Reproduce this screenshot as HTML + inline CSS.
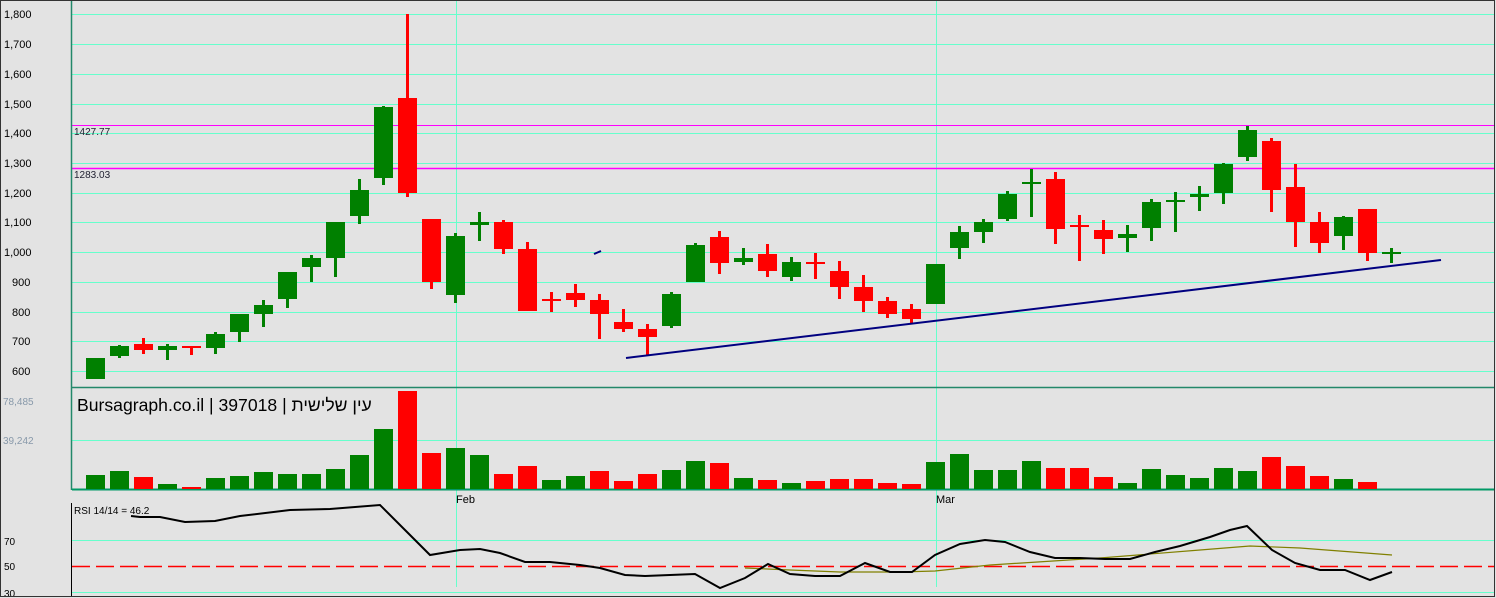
<!DOCTYPE html>
<html><head><meta charset="utf-8"><style>
html,body{margin:0;padding:0;background:#e3e3e3;}
svg{display:block;font-family:"Liberation Sans",Arial,sans-serif;}
</style></head><body>
<svg id="s" width="1496" height="598" viewBox="0 0 1496 598" xmlns="http://www.w3.org/2000/svg">
<rect x="0" y="0" width="1496" height="598" fill="#e3e3e3"/>
<g stroke="#66ffcc" stroke-width="1">
<line x1="72" y1="14.5" x2="1494" y2="14.5"/><line x1="72" y1="44.5" x2="1494" y2="44.5"/>
<line x1="72" y1="74.5" x2="1494" y2="74.5"/><line x1="72" y1="104.5" x2="1494" y2="104.5"/>
<line x1="72" y1="133.5" x2="1494" y2="133.5"/><line x1="72" y1="163.5" x2="1494" y2="163.5"/>
<line x1="72" y1="193.5" x2="1494" y2="193.5"/><line x1="72" y1="222.5" x2="1494" y2="222.5"/>
<line x1="72" y1="252.5" x2="1494" y2="252.5"/><line x1="72" y1="282.5" x2="1494" y2="282.5"/>
<line x1="72" y1="312.5" x2="1494" y2="312.5"/><line x1="72" y1="341.5" x2="1494" y2="341.5"/>
<line x1="72" y1="371.5" x2="1494" y2="371.5"/>
<line x1="72" y1="440.5" x2="1494" y2="440.5"/>
<line x1="72" y1="540.5" x2="1494" y2="540.5"/><line x1="72" y1="592.5" x2="1494" y2="592.5"/>
<line x1="456.5" y1="0" x2="456.5" y2="587"/><line x1="936.5" y1="0" x2="936.5" y2="587"/>
</g>
<line x1="72" y1="125.5" x2="1494" y2="125.5" stroke="#ff00ff" stroke-width="1"/>
<line x1="72" y1="168.5" x2="1494" y2="168.5" stroke="#ff00ff" stroke-width="1.5"/>
<line x1="72" y1="566.5" x2="1494" y2="566.5" stroke="#ff0000" stroke-width="1.5" stroke-dasharray="18,6"/>
<line x1="71.5" y1="0" x2="71.5" y2="490" stroke="#22886a" stroke-width="1.5"/>
<line x1="72" y1="387.5" x2="1494" y2="387.5" stroke="#22886a" stroke-width="1.5"/>
<line x1="72" y1="489.5" x2="1494" y2="489.5" stroke="#009966" stroke-width="2"/>
<line x1="71.5" y1="503" x2="71.5" y2="596" stroke="#000" stroke-width="1"/>
<g font-size="11" fill="#000">
<text x="4" y="18">1,800</text><text x="4" y="48">1,700</text><text x="4" y="78">1,600</text>
<text x="4" y="108">1,500</text><text x="4" y="137">1,400</text><text x="4" y="167">1,300</text>
<text x="4" y="197">1,200</text><text x="4" y="226">1,100</text><text x="4" y="256">1,000</text>
<text x="12" y="286">900</text><text x="12" y="316">800</text><text x="12" y="345">700</text>
<text x="12" y="375">600</text>
</g>
<g font-size="10" fill="#8899aa"><text x="3" y="405">78,485</text><text x="3" y="444">39,242</text></g>
<g font-size="10" fill="#000"><text x="4" y="545">70</text><text x="4" y="570">50</text><text x="4" y="597">30</text></g>
<g font-size="10" fill="#223"><text x="74" y="135">1427.77</text><text x="74" y="178">1283.03</text></g>
<text x="77" y="411" font-size="17.6" fill="#000" font-family="Liberation Sans, 'Noto Sans CJK JP', sans-serif">Bursagraph.co.il | 397018 | עין שלישית</text>
<text x="456" y="503" font-size="11" fill="#000">Feb</text>
<text x="936" y="503" font-size="11" fill="#000">Mar</text>
<text x="74" y="514" font-size="10" fill="#000">RSI 14/14 = 46.2</text>
<g id="c"></g>
<line x1="626" y1="358" x2="1441" y2="260" stroke="#000080" stroke-width="2"/>
<line x1="594" y1="254" x2="601" y2="251" stroke="#000080" stroke-width="2"/>
<polyline fill="none" stroke="#808000" stroke-width="1.2" points="745,568 790,570 840,572 900,572 935,571 990,565 1100,558 1200,550 1250,546 1300,548 1392,555"/>
<polyline fill="none" stroke="#000" stroke-width="2" points="131,516 140,517 160,517 185,522 215,521 240,516 290,510 330,509 380,505 405,530 430,555 460,550 480,549 500,553 525,562 550,562 580,565 600,568 625,575 645,576 670,575 695,574 720,588 745,578 768,564 790,574 815,576 840,576 865,563 890,572 912,572 935,555 960,544 985,540 1005,542 1030,552 1055,558 1080,558 1105,559 1130,559 1155,552 1180,546 1210,537 1230,530 1247,526 1272,550 1295,563 1320,570 1345,570 1370,580 1392,572"/>
<rect x="0.5" y="0.5" width="1494" height="596" fill="none" stroke="#333" stroke-width="1"/>
</svg>
<script>
var G='#008000',R='#ff0000';
var d=[
[G,358,379,358,379,475],[G,346,356,345,358,471],[R,344,350,338,354,477],[G,346,350,344,360,484],[R,346,348,346,355,487],
[G,334,348,332,354,478],[G,314,332,314,342,476],[G,305,314,300,327,472],[G,272,299,272,308,474],[G,258,267,255,282,474],
[G,222,258,222,277,469],[G,190,216,179,224,455],[G,107,178,106,185,429],[R,98,193,14,197,391],[R,219,282,219,289,453],
[G,236,295,233,303,448],[G,222,225,212,241,455],[R,222,249,220,254,474],[R,249,311,242,311,466],[R,299,301,292,312,480,G],
[R,293,300,284,307,476,G],[R,300,314,294,339,471],[R,322,329,309,332,481],[R,329,337,324,356,474],[G,294,326,292,328,470],
[G,245,282,243,282,461],[R,237,263,231,274,463],[G,258,262,248,265,478],[R,254,271,244,277,480],[G,262,277,257,281,483],
[R,262,264,253,279,481],[R,271,287,261,299,479],[R,287,301,275,312,479],[R,301,314,297,318,483],[R,309,319,304,323,484],
[G,264,304,264,304,462],[G,232,248,226,259,454],[G,222,232,219,243,470],[G,194,219,191,221,470],[G,182,184,169,217,461],
[R,179,229,172,244,468],[R,225,227,215,261,468],[R,230,239,220,254,477],[G,234,238,225,252,483],[G,202,228,199,241,469],
[G,200,202,192,232,475],[G,194,197,186,211,478],[G,164,193,163,204,468],[G,130,157,126,161,471],[R,141,190,138,212,457],
[R,187,222,164,247,466],[R,222,243,212,253,476],[G,217,236,216,250,479],[R,209,253,209,261,482],[G,252,253,248,263,489]];
var h='';
d.forEach(function(c,i){var x=86+24*i,cx=x+9;
h+='<rect x="'+(cx-1)+'" y="'+c[3]+'" width="3" height="'+(c[4]-c[3])+'" fill="'+c[0]+'"/>';
var bh=Math.max(c[2]-c[1],2);
h+='<rect x="'+x+'" y="'+c[1]+'" width="19" height="'+bh+'" fill="'+c[0]+'"/>';
if(c[5]<489)h+='<rect x="'+x+'" y="'+c[5]+'" width="19" height="'+(489-c[5])+'" fill="'+(c[6]||c[0])+'"/>';
});
document.getElementById('c').innerHTML=h;
</script>
</body></html>
